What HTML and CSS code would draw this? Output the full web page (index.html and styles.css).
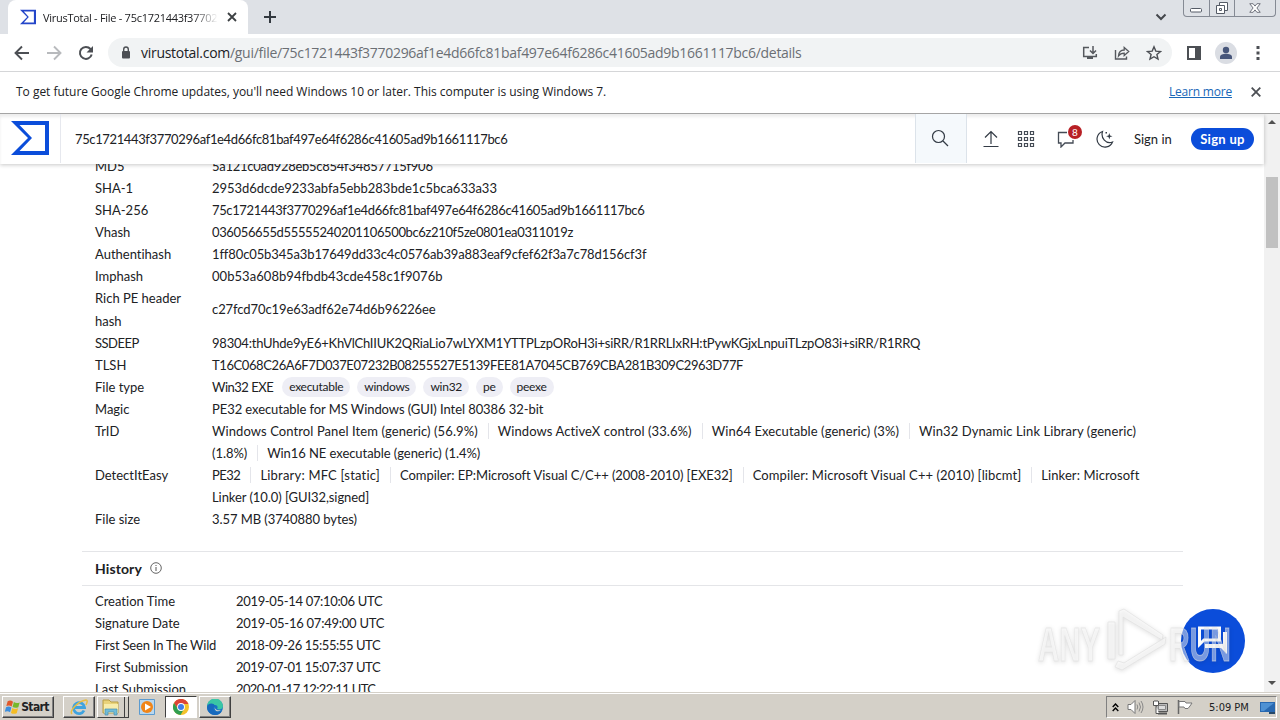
FILE: index.html
```
<!DOCTYPE html>
<html lang="en">

<head>
    <meta charset="UTF-8">
    <title>VirusTotal - File</title>
    <link rel="stylesheet" href="styles.css">
</head>

<body>
    <div class="tabs">
        <div class="tab">
            <svg class="fav" width="16" height="16" viewBox="0 0 38 34"><path fill="#2446c9" fill-rule="evenodd" d="M0 0h38v34H0l17-17zM9 4l12 13L9 30h24V4z"/></svg>
            <span class="tab-title">VirusTotal - File - 75c1721443f37702</span>
            <svg class="tab-x" width="10" height="10" viewBox="0 0 10 10"><path d="M1 1l8 8M9 1l-8 8" stroke="#3c4043" stroke-width="1.8"/></svg>
        </div>
        <svg class="plus" width="12" height="12" viewBox="0 0 12 12"><path d="M6 0v12M0 6h12" stroke="#333940" stroke-width="2"/></svg>
        <svg class="down" width="12" height="8" viewBox="0 0 12 8"><path d="M1.500 1.500L6 6l4.500-4.500" fill="none" stroke="#44474c" stroke-width="2"/></svg>
        <div class="win">
            <span class="w1"><svg width="25" height="16" viewBox="0 0 25 16"><rect x="6.500" y="8.500" width="11" height="3.500" rx="1" fill="#fff" stroke="#555b66"/></svg></span>
            <span class="w2"><svg width="24" height="16" viewBox="0 0 24 16"><path d="M9.500 2.500h8v8h-8z" fill="#fff" stroke="#555b66"/><path d="M6.500 5.500h8v8h-8z" fill="#fff" stroke="#555b66"/><path d="M9.500 8.500h2v2h-2z" fill="none" stroke="#555b66"/></svg></span>
            <span class="w3"><svg width="40" height="16" viewBox="0 0 42 16"><path d="M15.500 3.500h3.500l2 2.500 2-2.500h3.500L23 8l3.500 4.500H23L21 10l-2 2.500h-3.500L19 8z" fill="#fff" stroke="#6a6e78"/></svg></span>
        </div>
    </div>

    <div class="toolbar">
        <svg width="16" height="16" viewBox="0 0 16 16"><path d="M15 8H2M8 1.500L1.500 8 8 14.500" fill="none" stroke="#4c4f54" stroke-width="1.900"/></svg>
        <svg width="16" height="16" viewBox="0 0 16 16"><path d="M1 8h13M8 1.500L14.500 8 8 14.500" fill="none" stroke="#b8babd" stroke-width="1.900"/></svg>
        <svg width="16" height="16" viewBox="0 0 16 16"><path d="M13.700 9.500A6 6 0 1 1 12.500 4l1 1.500" fill="none" stroke="#4c4f54" stroke-width="2"/><path d="M15 1v6.500H8.500z" fill="#4c4f54"/></svg>
        <div class="omni">
            <svg class="lock" width="10" height="13" viewBox="0 0 10 13"><rect x="1" y="5" width="8" height="7.500" rx="1" fill="#4c4f54"/><path d="M2.700 5V3.300a2.300 2.300 0 0 1 4.600 0V5" fill="none" stroke="#4c4f54" stroke-width="1.400"/></svg>
            <span class="url"><b>virustotal.com</b>/gui/file/75c1721443f3770296af1e4d66fc81baf497e64f6286c41605ad9b1661117bc6/details</span>
            <svg width="16" height="16" viewBox="0 0 16 16"><path d="M7 2.500H1.700v9H14.300V9M11 1v7M8 5.500l3 3 3-3" fill="none" stroke="#55585d" stroke-width="1.500"/><path d="M5 12h6v2H5z" fill="#55585d"/></svg>
            <svg width="16" height="16" viewBox="0 0 16 16"><path d="M1.500 5v9h11v-2.500" fill="none" stroke="#55585d" stroke-width="1.400"/><path d="M4.500 11c.3-4 2.500-6 5.700-6V2.500L14.700 6.500l-4.500 4V8.200c-2.500 0-4.300.8-5.700 2.800z" fill="none" stroke="#55585d" stroke-width="1.300"/></svg>
            <svg width="16" height="16" viewBox="0 0 16 16"><path d="M8 1.800l1.800 4.300 4.700.4-3.600 3 1.100 4.600L8 11.700l-4 2.400 1.100-4.600-3.600-3 4.700-.4z" fill="none" stroke="#4c4f54" stroke-width="1.400"/></svg>
        </div>
        <svg width="16" height="16" viewBox="0 0 16 16"><path fill="#4c4f54" fill-rule="evenodd" d="M1 1h14v14H1zM3 3v10h6V3z"/></svg>
        <span class="avatar"><svg width="22" height="22" viewBox="0 0 22 22"><circle cx="11" cy="8" r="3.200" fill="#47567a"/><path d="M5 17v-2c0-2.500 3-3.300 6-3.300s6 .8 6 3.300v2z" fill="#47567a"/></svg></span>
        <svg width="4" height="14" viewBox="0 0 4 14"><path d="M.5 0h3v3h-3zM.5 5.500h3v3h-3zM.5 11h3v3h-3z" fill="#4c4f54"/></svg>
    </div>

    <div class="infobar">
        <span class="info-text">To get future Google Chrome updates, you'll need Windows 10 or later. This computer is using Windows 7.</span>
        <a class="learn">Learn more</a>
        <svg width="10" height="10" viewBox="0 0 10 10"><path d="M.7.7l8.600 8.600M9.300.7L.7 9.300" stroke="#4c4f54" stroke-width="1.800"/></svg>
    </div>

    <div class="view">
        <div class="page">
            <div class="header">
                <div class="logo"><svg width="38" height="34" viewBox="0 0 38 34"><path fill="#0b4dda" fill-rule="evenodd" d="M0 0h38v34H0l17-17zM8.500 4l12.500 13L8.500 30H34V4z"/></svg></div>
                <div class="search">75c1721443f3770296af1e4d66fc81baf497e64f6286c41605ad9b1661117bc6</div>
                <div class="find"><svg width="18" height="18" viewBox="0 0 18 18"><circle cx="7.500" cy="7.500" r="6" fill="none" stroke="#333b45" stroke-width="1.200"/><path d="M12 12l5 5" stroke="#333b45" stroke-width="1.300"/></svg></div>
                <svg class="up" width="16" height="18" viewBox="0 0 16 18"><path d="M8 14V1.500M2 7.500l6-6 6 6M.5 16.500h15" fill="none" stroke="#333b45" stroke-width="1.200"/></svg>
                <svg class="grid" width="18" height="18" viewBox="0 0 18 18"><path d="M1.500 1.500h3v3h-3zM7.500 1.500h3v3h-3zM13.500 1.500h3v3h-3zM1.500 7.500h3v3h-3zM7.500 7.500h3v3h-3zM13.500 7.500h3v3h-3zM1.500 13.500h3v3h-3zM7.500 13.500h3v3h-3zM13.500 13.500h3v3h-3z" fill="none" stroke="#444b55" stroke-width="1.200"/></svg>
                <div class="bell">
                    <svg width="18" height="18" viewBox="0 0 18 18"><path d="M10 2.500H1.500v10.500H4v4l4-4h8v-3" fill="none" stroke="#444b55" stroke-width="1.300"/></svg>
                    <span class="count">8</span>
                </div>
                <svg class="moon" width="18" height="18" viewBox="0 0 18 18"><path d="M6.500 1.500A8 8 0 1 0 16.500 12C10 14.500 4.500 8 6.500 1.500z" fill="none" stroke="#333b45" stroke-width="1.200"/><path d="M13.300 3l.8 2.400 2.400.8-2.400.8-.8 2.400-.8-2.400-2.400-.8 2.400-.8zM9.500 2h1.500v1.500H9.500z" fill="#333b45"/></svg>
                <span class="signin">Sign in</span>
                <span class="signup">Sign up</span>
            </div>
            <div class="main">
                <div class="props">
                    <div class="row"><span>MD5</span><p class="md5">5a121c0ad928eb5c854f34857715f906</p></div>
                    <div class="row"><span>SHA-1</span><p class="sha1">2953d6dcde9233abfa5ebb283bde1c5bca633a33</p></div>
                    <div class="row"><span>SHA-256</span><p class="sha256">75c1721443f3770296af1e4d66fc81baf497e64f6286c41605ad9b1661117bc6</p></div>
                    <div class="row"><span>Vhash</span><p class="vhash">036056655d55555240201106500bc6z210f5ze0801ea0311019z</p></div>
                    <div class="row"><span>Authentihash</span><p class="authenti">1ff80c05b345a3b17649dd33c4c0576ab39a883eaf9cfef62f3a7c78d156cf3f</p></div>
                    <div class="row"><span>Imphash</span><p class="imphash">00b53a608b94fbdb43cde458c1f9076b</p></div>
                    <div class="row tall"><span>Rich PE header<br>hash</span><p class="rich">c27fcd70c19e63adf62e74d6b96226ee</p></div>
                    <div class="row"><span class="tight">SSDEEP</span><p class="ssdeep">98304:thUhde9yE6+KhVlChIIUK2QRiaLio7wLYXM1YTTPLzpORoH3i+siRR/R1RRLIxRH:tPywKGjxLnpuiTLzpO83i+siRR/R1RRQ</p></div>
                    <div class="row"><span>TLSH</span><p class="tlsh">T16C068C26A6F7D037E07232B08255527E5139FEE81A7045CB769CBA281B309C2963D77F</p></div>
                    <div class="row"><span>File type</span><div class="tags"><p class="tight">Win32 EXE</p><i>executable</i><i>windows</i><i>win32</i><i>pe</i><i>peexe</i></div></div>
                    <div class="row"><span>Magic</span><p class="magic">PE32 executable for MS Windows (GUI) Intel 80386 32-bit</p></div>
                    <div class="row"><span>TrID</span><div class="list"><p><em>Windows Control Panel Item (generic) (56.9%)</em><em>Windows ActiveX control (33.6%)</em><em>Win64 Executable (generic) (3%)</em><em>Win32 Dynamic Link Library (generic)</em></p><p class="narrow"><em>(1.8%)</em><em>Win16 NE executable (generic) (1.4%)</em></p></div></div>
                    <div class="row"><span>DetectItEasy</span><div class="list"><p><em class="tight">PE32</em><em class="wide">Library: MFC [static]</em><em class="narrow">Compiler: EP:Microsoft Visual C/C++ (2008-2010) [EXE32]</em><em>Compiler: Microsoft Visual C++ (2010) [libcmt]</em><em>Linker: Microsoft</em></p><p class="magic">Linker (10.0) [GUI32,signed]</p></div></div>
                    <div class="row"><span>File size</span><p class="magic">3.57 MB (3740880 bytes)</p></div>
                </div>
                <div class="history">
                    <h3>History <svg width="12" height="12" viewBox="0 0 12 12"><circle cx="6" cy="6" r="5.300" fill="none" stroke="#555" stroke-width=".9"/><path d="M6 5v4M6 3v1" stroke="#555"/></svg></h3>
                    <div class="row"><span>Creation Time</span><p>2019-05-14 07:10:06 UTC</p></div>
                    <div class="row"><span>Signature Date</span><p class="d2">2019-05-16 07:49:00 UTC</p></div>
                    <div class="row"><span class="seen">First Seen In The Wild</span><p class="d3">2018-09-26 15:55:55 UTC</p></div>
                    <div class="row"><span>First Submission</span><p class="d3">2019-07-01 15:07:37 UTC</p></div>
                    <div class="row"><span>Last Submission</span><p class="d4">2020-01-17 12:22:11 UTC</p></div>
                </div>
            </div>
        </div>
        <div class="scroll">
            <svg width="8" height="4" viewBox="0 0 8 4"><path d="M0 4l4-4 4 4z" fill="#505050"/></svg>
            <div class="thumb"></div>
            <svg class="sd" width="8" height="4" viewBox="0 0 8 4"><path d="M0 0l4 4 4-4z" fill="#505050"/></svg>
        </div>
        <div class="chat"><svg width="32" height="32" viewBox="0 0 32 32"><path d="M3.500 4h20v12H8l-4.500 4.500z" fill="none" stroke="#fff" stroke-width="3"/><path d="M27 8h4v22l-6-6H9v-4h18z" fill="#fff"/></svg></div>
        <svg class="mark" width="200" height="68" viewBox="0 0 200 68">
            <g fill="#fff" fill-opacity=".45" stroke="#ddd" stroke-opacity=".6" stroke-width="1">
                <text x="3" y="54" textLength="62" lengthAdjust="spacingAndGlyphs">ANY</text>
                <text x="134" y="54" textLength="62" lengthAdjust="spacingAndGlyphs">RUN</text>
                <path fill-rule="evenodd" d="M73 15h7v37h-7zM84 4l5-2 39 26-1 5-39-23v38h-4z"/>
                <path d="M83 54l6 2 42-26-1 7-43 26-7-3z"/>
            </g>
        </svg>
    </div>

    <div class="taskbar">
        <div class="btn start">
            <svg width="16" height="16" viewBox="0 0 18 17"><path d="M3 2c2-1 4-1 6 .5L7.500 8C5.500 6.500 3.500 6.500 1.500 7.500z" fill="#e0582a"/><path d="M10 3c2 1.200 4 1.300 6.500.3L15 8.800c-2.500 1-4.500.8-6.500-.3z" fill="#76b82a"/><path d="M1.200 8.700c2-1 4-1 6 .4l-1.500 5.400c-2-1.400-4-1.400-6-.4z" fill="#3b8ede"/><path d="M8.200 9.700c2 1.200 4 1.300 6.500.3l-1.500 5.500c-2.500 1-4.500.8-6.500-.3z" fill="#f5bd25"/></svg>
            Start
        </div>
        <div class="btn ie"><svg width="20" height="18" viewBox="0 0 20 18"><path d="M15 12.500A5.500 5.500 0 1 1 15.500 9.500H5" fill="none" stroke="#3fa3df" stroke-width="2.800"/><path d="M3 16C0 13 9 3 17 2c2 0 1 3 0 5" fill="none" stroke="#e8bd42" stroke-width="1.500"/></svg></div>
        <div class="btn folder"><svg width="20" height="18" viewBox="0 0 20 18"><path d="M2 2h6l2 2h7v11H2z" fill="#e9d27a" stroke="#b99d45"/><path d="M3 6h14v9H3z" fill="#f8ecab"/><path d="M4 17v-6h12v6h-3v-3H7v3z" fill="#70bcd8" stroke="#4c91b0" stroke-width=".7"/></svg></div>
        <div class="player"><svg width="16" height="16" viewBox="0 0 16 16"><path d="M.5.500h15v15H.5z" fill="#b9d7ee" stroke="#5b9bd0"/><circle cx="8" cy="8" r="6" fill="#f08519"/><path d="M6 4.500l6 3.500-6 3.500z" fill="#fff"/></svg></div>
        <div class="btn active"><svg width="16" height="16" viewBox="0 0 16 16"><circle cx="8" cy="8" r="8" fill="#f3c22b"/><path d="M1 4a8 8 0 0 1 14 0l.4 1H8L5 10z" fill="#dc4437"/><path d="M1 4a8 8 0 0 0 6.500 12L11 10H5z" fill="#2f9e50"/><circle cx="8" cy="8" r="3.900" fill="#fff"/><circle cx="8" cy="8" r="3" fill="#3f7de8"/></svg></div>
        <div class="btn edge"><svg width="16" height="16" viewBox="0 0 16 16"><circle cx="8" cy="8" r="8" fill="#1672c4"/><path d="M0 8a8 8 0 0 1 16-1c0 3-3 4-6 3 1-1 1-4-2-4S3 8 0 8z" fill="#3ac6a4"/><path d="M0 8c0-4 7-5 8-1-3 1-3 6 3 6 2 0 3-.5 4-1-2 4-7 5-11 3C1 13 0 11 0 8z" fill="#1769bd"/><path d="M8 7.500c-.8 2 1.500 4.500 6 3.500-3 2.500-7.500 1-6-3.500z" fill="#d4d0c8"/></svg></div>
        <div class="tray">
            <svg width="7" height="9" viewBox="0 0 7 9"><path d="M.7 4l2.800-3 2.800 3M.7 8l2.800-3 2.800 3" fill="none" stroke="#000" stroke-width="1.400"/></svg>
            <svg width="17" height="14" viewBox="0 0 17 14"><path d="M1 4.500h3l4-4v13l-4-4H1z" fill="#fff" stroke="#777"/><path d="M10 4.500q1.500 2.500 0 5M12 2.500q3 4.500 0 9M14 1q4 6 0 12" fill="none" stroke="#888"/></svg>
            <svg width="17" height="15" viewBox="0 0 17 15"><path d="M4.500 3.500h11v8h-11z" fill="#bbb" stroke="#555"/><path d="M6.500 5.500h7v4h-7z" fill="#ddd" stroke="#888"/><path d="M6 13.500h9" stroke="#555" stroke-width="2"/><path d="M1.500 1v4.500h5V1M4 5.500v8h3M3 0v2M5 0v2" fill="#fff" stroke="#555"/></svg>
            <svg width="16" height="14" viewBox="0 0 16 14"><path d="M1.500 0v14" stroke="#666" stroke-width="1.500"/><path d="M2 1.500h6l1 1.500h6l-2 3-2 2.500H8L7 7H2z" fill="#fff" stroke="#777"/></svg>
            <span class="clock">5:09 PM</span>
            <svg width="16" height="13" viewBox="0 0 16 13"><path d="M0 1h15v10H0z" fill="#2868b0"/><path d="M1 2h13L4 10H1z" fill="#4e91d3"/><path d="M9 11h6v2H9z" fill="#264868"/></svg>
        </div>
    </div>
</body>
</html>
```

FILE: styles.css
```
* {
    margin: 0;
    padding: 0;
    box-sizing: border-box;
}
body {
    width: 1280px;
    height: 720px;
    overflow: hidden;
    background: #fff;
    font-family: "Open Sans", sans-serif;
    font-size: 12px;
    color: #202124;
    white-space: nowrap;
}
svg {
    display: block;
    flex: none;
}
i, em {
    font-style: normal;
}

/* browser */
.tabs {
    height: 34px;
    background: #dee1e6;
    display: flex;
}
.tab {
    width: 240px;
    margin-left: 8px;
    background: #fff;
    border-radius: 8px 8px 0 0;
    display: flex;
    align-items: center;
    padding-left: 12px;
}
.tab-title {
    width: 175px;
    margin-left: 7px;
    overflow: hidden;
    font-size: 11px;
    letter-spacing: -0.28px;
    -webkit-mask-image: linear-gradient(90deg, #000 150px, transparent);
}
.tab-x {
    margin-left: 9px;
}
.plus {
    margin: 11px 0 0 16px;
}
.down {
    margin: 13px 0 0 auto;
}
.win {
    display: flex;
    width: 93px;
    height: 17px;
    margin: 0 4px 0 16px;
    border: 1px solid #858a94;
    border-top: 0;
    border-radius: 0 0 4px 4px;
}
.w2 {
    border: 1px solid #858a94;
    border-width: 0 1px;
}
.toolbar {
    height: 38px;
    padding: 0 20px 0 14px;
    border-bottom: 1px solid #d5d6d8;
    display: flex;
    align-items: center;
}
.toolbar > svg {
    margin-right: 16px;
}
.toolbar > svg:nth-child(3) {
    margin-right: 14px;
}
.omni {
    width: 1064px;
    height: 29px;
    margin-right: 14px;
    border-radius: 15px;
    background: #f1f3f4;
    display: flex;
    align-items: center;
    padding: 0 10px 0 13px;
    gap: 16px;
}
.lock {
    margin-right: -6px;
}
.url {
    flex: 1;
    font-size: 14px;
    letter-spacing: -0.29px;
    color: #6b6f74;
}
.url b {
    font-weight: 400;
    color: #202124;
}
.toolbar > svg:nth-child(5) {
    margin-right: 13px;
}
.avatar {
    background: #dadde3;
    border-radius: 50%;
    margin-right: 19px;
}
.toolbar > svg:last-child {
    margin: 0;
}
.infobar {
    height: 42px;
    display: flex;
    align-items: center;
    padding: 0 19px 2px 16px;
    border-bottom: 1px solid #a5a5a5;
}
.info-text {
    letter-spacing: -0.02px;
}
.learn {
    margin: 0 19px 0 auto;
    color: #1967b8;
    letter-spacing: -0.2px;
    text-decoration: underline;
}

/* page */
.view {
    height: 578px;
    display: flex;
    position: relative;
    font-family: Lato, sans-serif;
    font-size: 13px;
    font-variant-ligatures: none;
    overflow: hidden;
}
.page {
    width: 1264px;
}
.header {
    height: 50px;
    padding-bottom: 1px;
    position: relative;
    background: #fff;
    box-shadow: inset 0 3px 3px #eee, 0 1px 4px rgba(0,0,0,.22);
    display: flex;
    align-items: center;
}
.logo {
    width: 61px;
    height: 49px;
    padding: 7px 0 0 11px;
    border-right: 1px solid #e6e8ee;
}
.search {
    width: 854px;
    padding-left: 14px;
    letter-spacing: -0.37px;
}
.find {
    width: 52px;
    height: 49px;
    padding: 15px 0 0 15px;
    background: #f5f9fc;
    border: 1px solid #dce3ea;
    border-width: 0 1px;
}
.up {
    margin-left: 16px;
}
.grid {
    margin-left: 18px;
}
.bell {
    position: relative;
    margin-left: 22px;
}
.count {
    position: absolute;
    left: 11px;
    top: -5px;
    width: 14px;
    height: 14px;
    border-radius: 50%;
    background: #b82025;
    color: #fff;
    font-size: 10px;
    line-height: 14px;
    text-align: center;
}
.moon {
    margin-left: 21px;
}
.signin {
    margin-left: 20px;
}
.signup {
    width: 63px;
    height: 22px;
    margin-left: auto;
    margin-right: 10px;
    border-radius: 11px;
    background: #0b4dda;
    color: #fff;
    text-align: center;
    line-height: 22px;
    letter-spacing: 0.3px;
    font-weight: 700;
}
.main {
    margin-top: -9px;
    padding-left: 82px;
}
.row {
    display: flex;
    padding-left: 13px;
    line-height: 22px;
}
.row > span {
    width: 117px;
}
.tall {
    height: 45px;
    line-height: 22.5px;
    align-items: center;
}
.md5 {
    letter-spacing: -0.27px;
}
.sha1 {
    letter-spacing: -0.02px;
}
.sha256 {
    letter-spacing: -0.37px;
}
.vhash {
    letter-spacing: -0.36px;
}
.authenti {
    letter-spacing: -0.12px;
}
.imphash {
    letter-spacing: 0.05px;
}
.rich {
    letter-spacing: -0.08px;
}
.ssdeep {
    letter-spacing: -0.21px;
}
.tlsh {
    letter-spacing: -0.4px;
}
.magic {
    letter-spacing: -0.07px;
}
.row .tight {
    letter-spacing: -0.5px;
}
.tags {
    display: flex;
    align-items: center;
}
.tags p {
    margin-right: 9px;
}
.tags i {
    height: 20px;
    line-height: 19px;
    padding: 0 7px;
    margin-right: 7px;
    border-radius: 10px;
    background: #eeeef5;
    font-size: 12px;
    letter-spacing: -0.27px;
}
.list em {
    letter-spacing: 0.09px;
}
.list em + em {
    margin-left: 10px;
    padding-left: 9px;
    border-left: 1px solid #e4e5ea;
}
.list .narrow, .list .narrow em {
    letter-spacing: -0.06px;
}
.list .wide {
    letter-spacing: 0.2px;
}
.history {
    width: 1101px;
    margin-top: 21px;
    border-top: 1px solid #e4e5e8;
}
.history h3 {
    height: 34px;
    margin-bottom: 4px;
    padding: 0 0 1px 13px;
    border-bottom: 1px solid #e4e5e8;
    display: flex;
    align-items: center;
    gap: 8px;
    font-size: 14px;
    letter-spacing: 0.1px;
}
.history .row > span {
    width: 141px;
}
.history .seen {
    letter-spacing: -0.2px;
}
.history p {
    letter-spacing: -0.33px;
}
.history .d2 {
    letter-spacing: -0.25px;
}
.history .d3 {
    letter-spacing: -0.42px;
}
.history .d4 {
    letter-spacing: -0.63px;
}
.scroll {
    width: 16px;
    background: #f1f1f1;
    display: flex;
    flex-direction: column;
    align-items: center;
    padding: 6px 0 7px;
}
.thumb {
    width: 12px;
    height: 71px;
    margin-top: 53px;
    background: #c1c1c1;
}
.sd {
    margin-top: auto;
}
.chat {
    position: absolute;
    left: 1181px;
    top: 495px;
    width: 64px;
    height: 64px;
    padding: 15px;
    border-radius: 50%;
    background: #0b4dda;
}
.mark {
    position: absolute;
    left: 1035px;
    top: 493px;
    font: 700 48px "Liberation Sans", sans-serif;
    filter: drop-shadow(0 1px 2px rgba(0,0,0,.22));
}

/* taskbar */
.taskbar {
    height: 28px;
    background: #d4d0c8;
    border-top: 1px solid #d4d0c8;
    box-shadow: inset 0 1px #fff;
    position: relative;
    display: flex;
    padding: 3px 3px 0 2px;
}
.btn {
    width: 32px;
    height: 22px;
    border: 1px solid #404040;
    border-color: #fff #404040 #404040 #fff;
    box-shadow: inset -1px -1px #808080;
    display: flex;
    align-items: center;
    justify-content: center;
}
.start {
    width: 52px;
    font: 700 12px "DejaVu Sans Condensed", sans-serif;
    letter-spacing: -0.6px;
    padding-right: 2px;
}
.ie {
    margin-left: 9px;
}
.folder {
    width: 32px;
    padding-right: 4px;
    margin-left: 2px;
    box-shadow: inset -3px 0 #d4d0c8, inset -4px 0 #404040;
}
.player {
    width: 16px;
    margin: 3px 10px 0;
}
.active {
    background: #fff;
    border-color: #404040 #fff #fff #404040;
    box-shadow: none;
    margin-right: 2px;
}
.edge {
    padding-right: 1px;
}
.tray {
    width: 171px;
    height: 22px;
    margin-left: auto;
    border: 1px solid #808080;
    border-color: #808080 #fff #fff #808080;
    display: flex;
    align-items: center;
    padding-left: 5px;
    gap: 8px;
}
.clock {
    width: 42px;
    margin: 0 2px 0 8px;
    font: 11px "DejaVu Sans Condensed", sans-serif;
}
```
